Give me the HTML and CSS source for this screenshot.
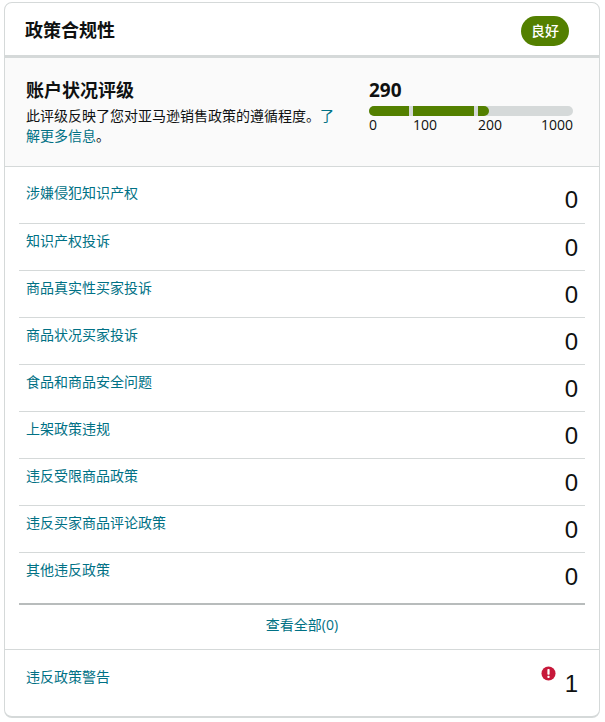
FILE: index.html
```html
<!DOCTYPE html>
<html lang="zh">
<head>
<meta charset="utf-8">
<title>政策合规性</title>
<link rel="stylesheet" href="styles.css">
</head>
<body>
<section class="card">
  <header class="head">
    <h2 class="title">政策合规性</h2>
    <span class="badge">良好</span>
  </header>
  <div class="rating">
    <div class="rating-text">
      <h3 class="rating-title">账户状况评级</h3>
      <p class="rating-desc">此评级反映了您对亚马逊销售政策的遵循程度。<a class="link" href="#">了解更多信息</a>。</p>
    </div>
    <div class="score">
      <div class="score-num">290</div>
      <div class="bar">
        <span class="seg seg-a"></span><span class="seg seg-b"></span><span class="seg seg-c"></span>
      </div>
      <div class="scale"><span class="tick-0">0</span><span class="tick-100">100</span><span class="tick-200">200</span><span class="tick-1000">1000</span></div>
    </div>
  </div>
  <ul class="rows">
    <li class="row"><a class="link" href="#">涉嫌侵犯知识产权</a><span class="count">0</span></li>
    <li class="row"><a class="link" href="#">知识产权投诉</a><span class="count">0</span></li>
    <li class="row"><a class="link" href="#">商品真实性买家投诉</a><span class="count">0</span></li>
    <li class="row"><a class="link" href="#">商品状况买家投诉</a><span class="count">0</span></li>
    <li class="row"><a class="link" href="#">食品和商品安全问题</a><span class="count">0</span></li>
    <li class="row"><a class="link" href="#">上架政策违规</a><span class="count">0</span></li>
    <li class="row"><a class="link" href="#">违反受限商品政策</a><span class="count">0</span></li>
    <li class="row"><a class="link" href="#">违反买家商品评论政策</a><span class="count">0</span></li>
    <li class="row"><a class="link" href="#">其他违反政策</a><span class="count">0</span></li>
  </ul>
  <div class="all"><a class="link" href="#">查看全部(0)</a></div>
  <div class="warn">
    <a class="link" href="#">违反政策警告</a>
    <span class="warn-right">
      <svg class="alert" viewBox="0 0 16 16" width="15" height="15" aria-hidden="true"><circle cx="8" cy="8" r="7.5" fill="#c7183a"/><rect x="6.8" y="3.2" width="2.4" height="6.2" rx="0.8" fill="#fff"/><rect x="6.8" y="10.4" width="2.4" height="2.3" rx="0.8" fill="#fff"/></svg>
      <span class="count">1</span>
    </span>
  </div>
</section>
</body>
</html>
```
FILE: styles.css
```css
* { box-sizing: border-box; }
html, body { margin: 0; padding: 0; background: #fff; }
body {
  padding: 2px 0 0 4px;
  font-family: "Open Sans", "Noto Sans CJK SC", sans-serif;
  color: #0f1111;
  font-size: 14px;
}
.card {
  width: 596px;
  height: 716px;
  border: 1px solid #d5d9d9;
  border-bottom-width: 2px;
  border-radius: 8px;
  overflow: hidden;
  background: #fff;
  display: flex;
  flex-direction: column;
}
.head {
  height: 55px;
  flex: none;
  border-bottom: 3px solid #d5d9d9;
  display: flex;
  align-items: flex-start;
  justify-content: space-between;
  padding: 10px 30px 0 20px;
}
.title {
  margin: 0;
  font-size: 18px;
  line-height: 34px;
  font-weight: 700;
}
.badge {
  width: 48px;
  height: 30px;
  margin-top: 3px;
  border-radius: 15px;
  background: #538000;
  color: #fff;
  font-size: 14px;
  font-weight: 500;
  line-height: 29px;
  text-align: center;
}
.rating {
  height: 109px;
  flex: none;
  background: #fafafa;
  border-bottom: 1px solid #d5d9d9;
  display: flex;
  justify-content: space-between;
  padding: 19px 26px 0 21px;
}
.rating-text { width: 314px; }
.rating-title {
  margin: 0 0 3px;
  font-size: 18px;
  line-height: 26px;
  font-weight: 700;
}
.rating-desc {
  margin: 0;
  font-size: 14px;
  line-height: 20px;
}
.link { color: #007185; text-decoration: none; font-size: 14px; }
.score { width: 204px; }
.score-num {
  font-size: 19px;
  font-weight: 700;
  line-height: 26px;
}
.bar {
  height: 10px;
  margin-top: 3px;
  border-radius: 5px;
  background: #d5d9d9;
  overflow: hidden;
  display: flex;
}
.seg { height: 10px; background: #538000; display: block; }
.seg-a { width: 40px; }
.seg-b { width: 61px; margin-left: 4px; }
.seg-c { width: 11px; margin-left: 4px; border-radius: 0 5px 5px 0; }
.scale {
  display: flex;
  font-size: 14px;
  line-height: 18px;
}
.tick-0 { width: 44px; }
.tick-100 { width: 65px; }
.tick-200 { flex: 1; }
.rows {
  list-style: none;
  margin: 0 14px;
  padding: 0;
  border-bottom: 2px solid #b8bcbc;
  height: 438px;
  flex: none;
}
.row {
  height: 47px;
  border-bottom: 1px solid #d5d9d9;
  display: flex;
  justify-content: space-between;
  padding: 7px 7px 0 7px;
}
.row:first-child { height: 57px; padding-top: 16px; }
.row:last-child { border-bottom: 0; height: 50px; }
.row .link { line-height: 20px; }
.count {
  font-family: "Liberation Sans", sans-serif;
  font-size: 24px;
  line-height: 32px;
  color: #0f1111;
}
.row .count { margin-top: 1px; }
.all {
  height: 45px;
  flex: none;
  border-bottom: 1px solid #d5d9d9;
  text-align: center;
  line-height: 40px;
}
.warn {
  flex: 1;
  display: flex;
  justify-content: space-between;
  padding: 17px 21px 0 21px;
}
.warn .link { line-height: 20px; }
.warn-right { display: flex; align-items: flex-start; gap: 9px; margin-top: -1px; }
.warn-right .count { margin-top: 2px; }
```
